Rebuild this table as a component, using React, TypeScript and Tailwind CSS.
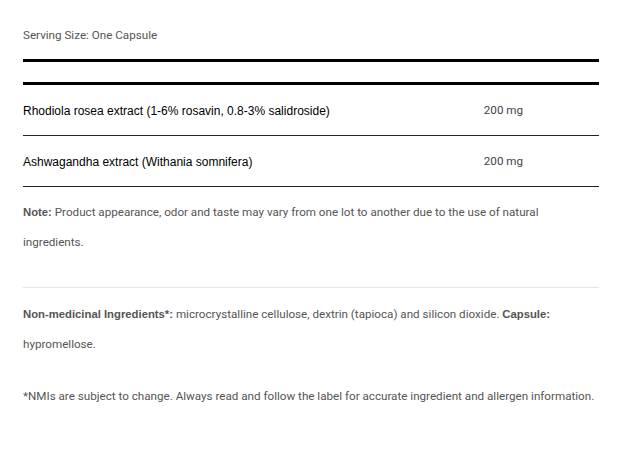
export default function App() {
  const body = "font-['Roboto',sans-serif] text-[11.65px] text-[#555]";
  const bold = "font-['Liberation_Sans',Arial,sans-serif] font-bold text-[11.3px] text-[#555]";
  return (
    <div className="bg-white w-[618px] h-[451px] pl-[23px] pr-[19px] pt-[26px]">
      <div className={`${body} leading-[18px]`}>Serving Size: One Capsule</div>
      <div className="mt-[15px] border-t-[3px] border-b-[3px] border-black h-[26px]" />
      <div className="flex flex-col">
        <div className="flex h-[51px] items-center border-b border-[#222] pt-[2px]">
          <div className="w-[80%] font-['Liberation_Sans',Arial,sans-serif] text-[12px] text-black">
            Rhodiola rosea extract (1-6% rosavin, 0.8-3% salidroside)
          </div>
          <div className="w-[20%] font-['Roboto',sans-serif] text-[11.65px] text-[#444]">200 mg</div>
        </div>
        <div className="flex h-[51px] items-center border-b border-[#222] pt-[2px]">
          <div className="w-[80%] font-['Liberation_Sans',Arial,sans-serif] text-[12px] text-black">
            Ashwagandha extract (Withania somnifera)
          </div>
          <div className="w-[20%] font-['Roboto',sans-serif] text-[11.65px] text-[#444]">200 mg</div>
        </div>
      </div>
      <p className={`${body} leading-[30px] mt-[10px]`}>
        <span className={bold}>Note:</span> Product appearance, odor and taste may vary from one lot to another due to the use of natural ingredients.
      </p>
      <div className="mt-[30px] border-t border-[#e5e5e5]" />
      <p className={`${body} leading-[30px] mt-[11px]`}>
        <span className={bold}>Non-medicinal Ingredients*:</span> microcrystalline cellulose, dextrin (tapioca) and silicon dioxide. <span className={bold}>Capsule:</span> hypromellose.
      </p>
      <p className={`${body} leading-[30px] mt-[22px] whitespace-nowrap`}>
        *NMIs are subject to change. Always read and follow the label for accurate ingredient and allergen information.
      </p>
    </div>
  );
}
